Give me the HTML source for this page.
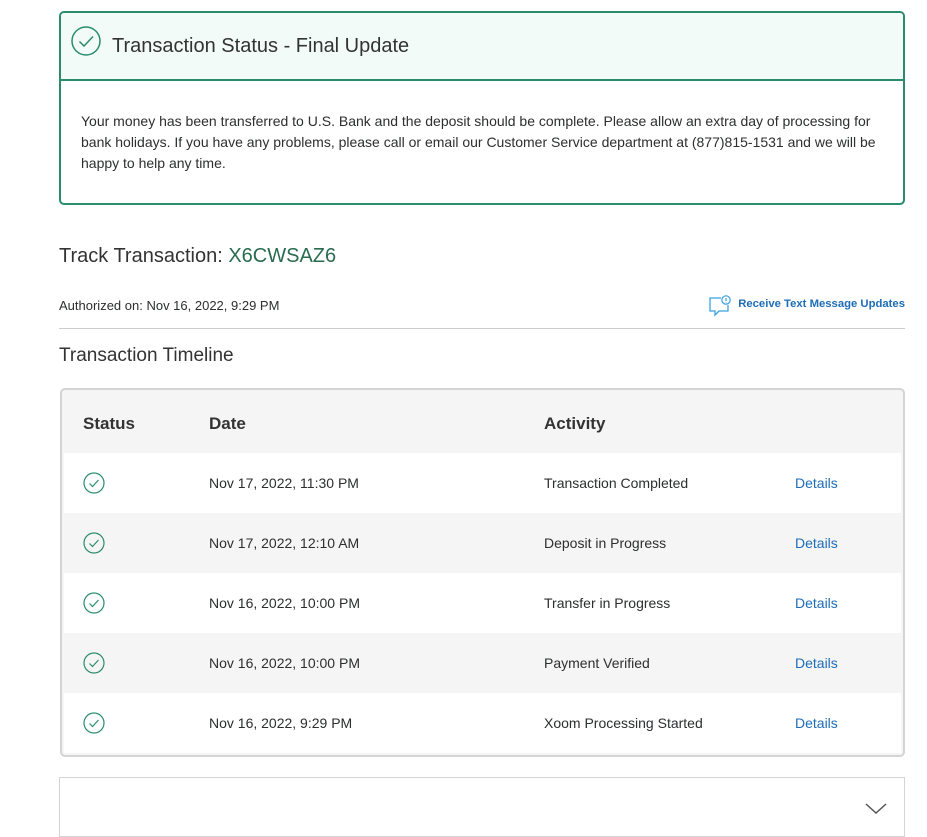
<!DOCTYPE html>
<html><head><meta charset="utf-8">
<style>
*{box-sizing:border-box;margin:0;padding:0}
body{width:927px;height:818px;overflow:hidden;background:#fff;font-family:"Liberation Sans",sans-serif;color:#2c2e2f;position:relative}
.abs{position:absolute}
.status{left:59px;top:11px;width:846px;height:194px;border:2px solid #2a8c6a;border-radius:5px;overflow:hidden}
.status .hd{height:68px;background:#f3fbf9;border-bottom:2px solid #2a8c6a;position:relative}
.status .hd span{position:absolute;left:51px;top:22px;font-size:20px;color:#333}
.status .bd{padding:30px 20px 0 20px;font-size:14px;line-height:21px;color:#2c2e2f}
.table{left:60px;top:388px;width:845px;height:369px;border:2px solid #d4d4d4;border-radius:5px;background:#f5f5f5;overflow:hidden}
.th{position:absolute;top:24px;font-size:17px;font-weight:bold;color:#333}
.row{position:absolute;left:2px;width:837px;height:60px;font-size:14px;color:#2c2e2f}
.row div{position:absolute;top:22px}
.row .d{left:145px}.row .a{left:480px}.row .l{left:731px;color:#1e6db7}
.row svg{position:absolute;left:19px;top:19px}
</style></head><body>
<div class="abs status">
 <div class="hd">
  <svg class="abs" style="left:10px;top:13px" width="30" height="30" viewBox="0 0 30 30"><circle cx="15" cy="15" r="14" fill="none" stroke="#2a8c6a" stroke-width="1.5"/><path d="M8.5 15.5l4.5 4.5 9-9.5" fill="none" stroke="#2a8c6a" stroke-width="1.5"/></svg>
  <span>Transaction Status - Final Update</span>
 </div>
 <div class="bd">Your money has been transferred to U.S. Bank and the deposit should be complete. Please allow an extra day of processing for bank holidays. If you have any problems, please call or email our Customer Service department at (877)815-1531 and we will be happy to help any time.</div>
</div>
<div class="abs" style="left:59px;top:245px;font-size:20px;color:#333">Track Transaction: <span style="color:#2a6b4f">X6CWSAZ6</span></div>
<div class="abs" style="left:59px;top:298px;font-size:13px;color:#2c2e2f">Authorized on: Nov 16, 2022, 9:29 PM</div>
<svg class="abs" style="left:708px;top:295px" width="24" height="22" viewBox="0 0 24 22"><path d="M13 3H2v13h5v4l4-4h9v-6" fill="none" stroke="#3aa0e0" stroke-width="1.3"/><circle cx="18" cy="5" r="4.2" fill="#fff" stroke="#3aa0e0" stroke-width="1.2"/><path d="M18 3v3M18 7.2v.6" stroke="#3aa0e0" stroke-width="1.2"/></svg>
<div class="abs" style="left:738px;top:298px;width:167px;text-align:right;font-size:11.3px;font-weight:bold;color:#1e6db7;white-space:nowrap">Receive Text Message Updates</div>
<div class="abs" style="left:59px;top:328px;width:846px;height:1px;background:#ccc"></div>
<div class="abs" style="left:59px;top:345px;font-size:19px;color:#333">Transaction Timeline</div>
<div class="abs table">
 <div class="th" style="left:21px">Status</div>
 <div class="th" style="left:147px">Date</div>
 <div class="th" style="left:482px">Activity</div>
 <div class="row" style="top:63px;background:#fff"><svg width="22" height="22" viewBox="0 0 22 22"><circle cx="11" cy="11" r="10" fill="none" stroke="#2a8c6a" stroke-width="1.2"/><path d="M6.5 11.5l3 3 6-6.5" fill="none" stroke="#2a8c6a" stroke-width="1.2"/></svg><div class="d">Nov 17, 2022, 11:30 PM</div><div class="a">Transaction Completed</div><div class="l">Details</div></div>
 <div class="row" style="top:123px;background:#f5f5f5"><svg width="22" height="22" viewBox="0 0 22 22"><circle cx="11" cy="11" r="10" fill="none" stroke="#2a8c6a" stroke-width="1.2"/><path d="M6.5 11.5l3 3 6-6.5" fill="none" stroke="#2a8c6a" stroke-width="1.2"/></svg><div class="d">Nov 17, 2022, 12:10 AM</div><div class="a">Deposit in Progress</div><div class="l">Details</div></div>
 <div class="row" style="top:183px;background:#fff"><svg width="22" height="22" viewBox="0 0 22 22"><circle cx="11" cy="11" r="10" fill="none" stroke="#2a8c6a" stroke-width="1.2"/><path d="M6.5 11.5l3 3 6-6.5" fill="none" stroke="#2a8c6a" stroke-width="1.2"/></svg><div class="d">Nov 16, 2022, 10:00 PM</div><div class="a">Transfer in Progress</div><div class="l">Details</div></div>
 <div class="row" style="top:243px;background:#f5f5f5"><svg width="22" height="22" viewBox="0 0 22 22"><circle cx="11" cy="11" r="10" fill="none" stroke="#2a8c6a" stroke-width="1.2"/><path d="M6.5 11.5l3 3 6-6.5" fill="none" stroke="#2a8c6a" stroke-width="1.2"/></svg><div class="d">Nov 16, 2022, 10:00 PM</div><div class="a">Payment Verified</div><div class="l">Details</div></div>
 <div class="row" style="top:303px;background:#fff"><svg width="22" height="22" viewBox="0 0 22 22"><circle cx="11" cy="11" r="10" fill="none" stroke="#2a8c6a" stroke-width="1.2"/><path d="M6.5 11.5l3 3 6-6.5" fill="none" stroke="#2a8c6a" stroke-width="1.2"/></svg><div class="d">Nov 16, 2022, 9:29 PM</div><div class="a">Xoom Processing Started</div><div class="l">Details</div></div>
</div>
<div class="abs" style="left:59px;top:777px;width:846px;height:60px;border:1px solid #d4d4d4"></div>
<svg class="abs" style="left:865px;top:803px" width="22" height="12" viewBox="0 0 22 12"><path d="M1 1l10 9 10-9" fill="none" stroke="#555" stroke-width="1.5"/></svg>
</body></html>
